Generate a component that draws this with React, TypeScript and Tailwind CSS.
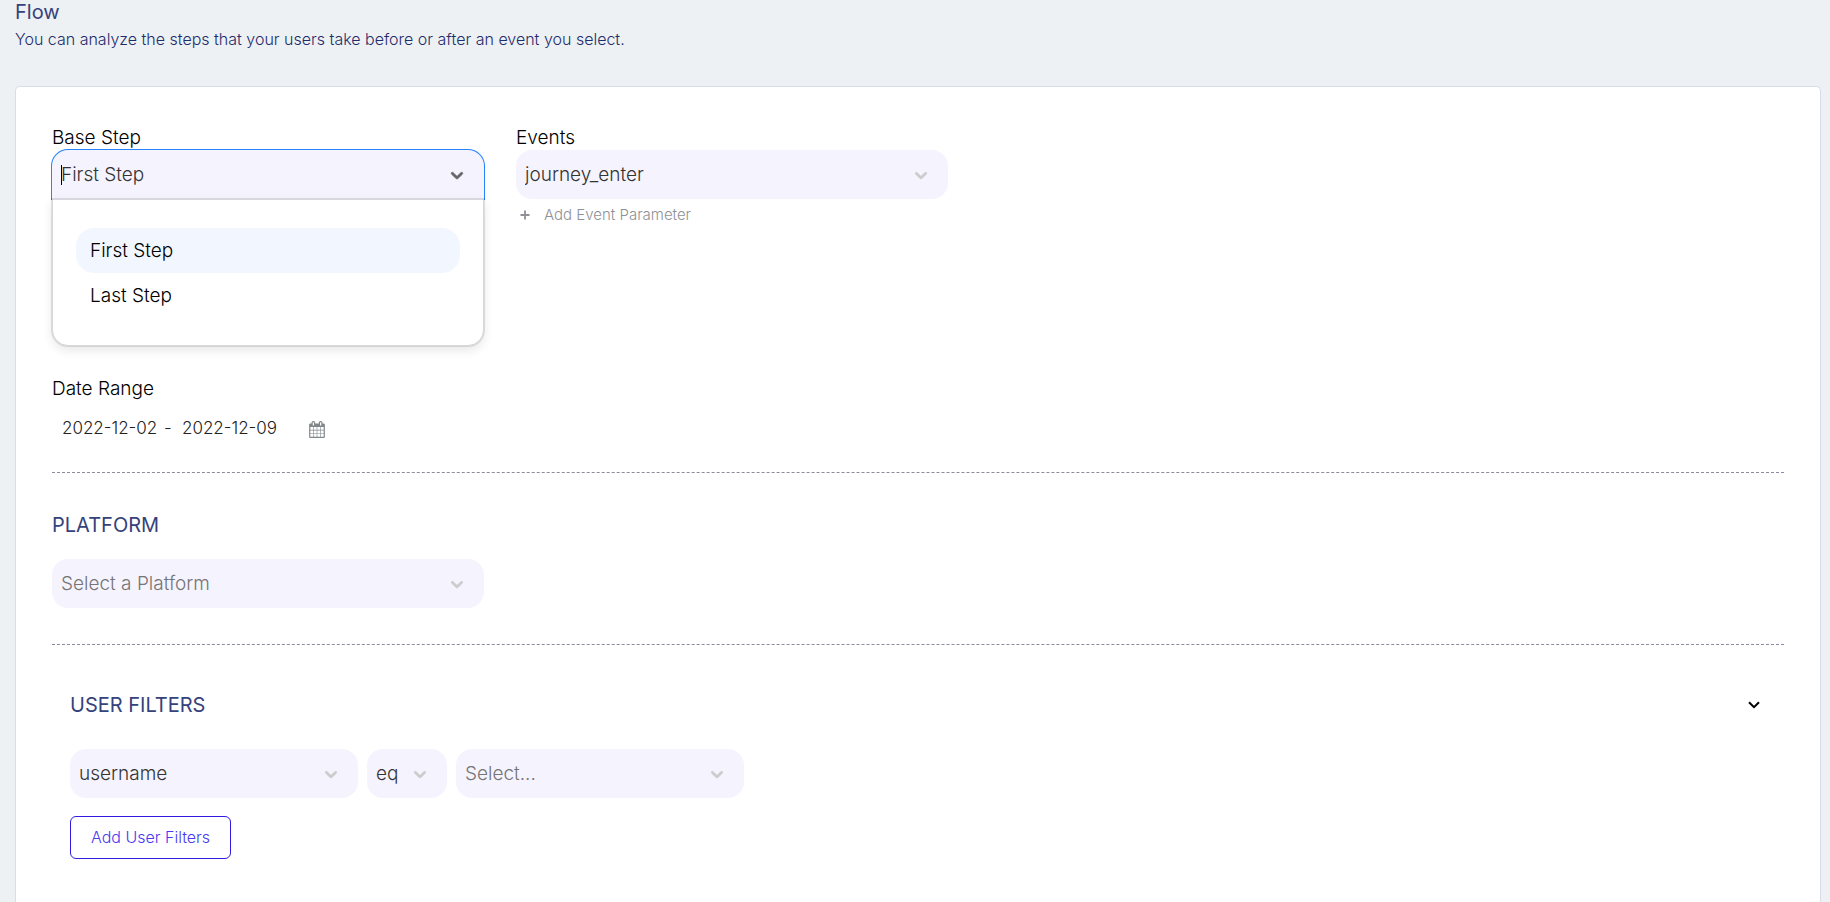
import { useState } from "react";
import type { ReactNode, SelectHTMLAttributes } from "react";

function Chevron({ className }: { className: string }) {
  return (
    <svg viewBox="0 0 20 20" aria-hidden="true" className={`size-5 fill-current stroke-current stroke-[0.6] ${className}`}>
      <path d="M4.516 7.548c0.436-0.446 1.043-0.481 1.576 0l3.908 3.747 3.908-3.747c0.533-0.481 1.141-0.446 1.574 0 0.436 0.445 0.408 1.197 0 1.615-0.406 0.418-4.695 4.502-4.695 4.502-0.217 0.223-0.502 0.335-0.787 0.335s-0.57-0.112-0.789-0.335c0 0-4.287-4.084-4.695-4.502s-0.436-1.17 0-1.615z" />
    </svg>
  );
}

function CalendarIcon() {
  return (
    <svg viewBox="0 0 1393.1 1500" aria-hidden="true" className="h-[17px] w-4 fill-[#82888a]">
      <path d="m107 1393h241v-241h-241z m295 0h268v-241h-268z m-295-295h241v-268h-241z m295 0h268v-268h-268z m-295-321h241v-241h-241z m616 616h268v-241h-268z m-321-616h268v-241h-268z m643 616h241v-241h-241z m-322-295h268v-268h-268z m-294-723v-241q0-11-8-19t-19-8h-54q-11 0-19 8t-8 19v241q0 11 8 19t19 8h54q11 0 19-8t8-19z m616 723h241v-268h-241z m-322-321h268v-241h-268z m322 0h241v-241h-241z m27-402v-241q0-11-8-19t-19-8h-54q-11 0-19 8t-8 19v241q0 11 8 19t19 8h54q11 0 19-8t8-19z m321-54v1072q0 43-32 75t-75 32h-1179q-43 0-75-32t-32-75v-1072q0-43 32-75t75-32h107v-80q0-56 39-95t95-39h54q55 0 94 39t39 95v80h322v-80q0-56 39-95t95-39h54q55 0 94 39t39 95v80h108q43 0 75 32t32 75z" />
    </svg>
  );
}

type SelectBoxProps = SelectHTMLAttributes<HTMLSelectElement> & { tone: string; children: ReactNode };

function SelectBox({ tone, children, ...rest }: SelectBoxProps) {
  return (
    <div className="grid h-[49px] items-center rounded-2xl bg-[#f5f3fe]">
      <select
        className={`col-start-1 row-start-1 h-full w-full appearance-none rounded-2xl bg-transparent pt-0.5 pr-8 pl-[9px] text-[19px] font-light outline-none ${tone}`}
        {...rest}
      >
        {children}
      </select>
      <Chevron className="pointer-events-none col-start-1 row-start-1 mr-[17px] justify-self-end text-[#cccccc]" />
    </div>
  );
}

const steps = ["First Step", "Last Step"];

export default function App() {
  const [step, setStep] = useState("First Step");

  return (
    <main className="flex min-h-screen flex-col bg-[#edf1f4] pr-[9px] pl-[15px] font-['Inter','Liberation_Sans',sans-serif] font-light text-black">
      <header className="pb-8 text-[#1f2c6b]">
        <h1 className="text-xl leading-6 font-normal text-[#36427c]">Flow</h1>
        <p className="text-base leading-[30px]">
          You can analyze the steps that your users take before or after an event you select.
        </p>
      </header>

      <section className="grow rounded-t-[5px] border border-b-0 border-[#dadde7] bg-white px-9 pt-[39px]">
        <div className="flex items-start gap-8">
          <div className="relative w-108">
            <label htmlFor="base-step" className="block text-[19px] leading-6">
              Base Step
            </label>
            <div className="flex h-[49px] items-center rounded-t-2xl bg-[#f5f3fe] pr-[17px] pl-[9px] ring-1 ring-[#2684ff]">
              <span className="-mr-px h-5 w-px shrink-0 bg-black" />
              <input
                id="base-step"
                role="combobox"
                aria-expanded="true"
                aria-controls="base-step-options"
                value={step}
                readOnly
                className="min-w-0 grow bg-transparent pt-0.5 text-[19px] text-[#333333] outline-none"
              />
              <Chevron className="shrink-0 text-[#666666]" />
            </div>
            <ul
              id="base-step-options"
              role="listbox"
              className="absolute top-full left-0 z-10 w-full rounded-b-2xl border border-[#d8d8dc] bg-white px-[23px] pt-7 pb-[27px] shadow-[0_0_0_1px_rgba(0,0,0,0.1),0_4px_11px_rgba(0,0,0,0.1)]"
            >
              {steps.map((name) => (
                <li
                  key={name}
                  role="option"
                  aria-selected={name === step}
                  onClick={() => setStep(name)}
                  className={`rounded-[18px] px-3.5 text-[19px] leading-[45px] ${name === step ? "bg-[#f2f7ff]" : ""}`}
                >
                  {name}
                </li>
              ))}
            </ul>
          </div>

          <div className="w-108">
            <label htmlFor="events" className="block text-[19px] leading-6">
              Events
            </label>
            <SelectBox id="events" tone="text-[#333333]">
              <option>journey_enter</option>
            </SelectBox>
            <button type="button" className="flex items-center gap-3.5 pt-1 pl-1 text-[15px] leading-6 text-[#8f9196]">
              <svg viewBox="0 0 10 10" aria-hidden="true" className="size-2.5 stroke-current stroke-[1.8]">
                <path d="M5 .5v9M.5 5h9" />
              </svg>
              Add Event Parameter
            </button>
          </div>
        </div>

        <div className="mt-[150px] border-b border-dashed border-[#8f8a9f] pb-[27px]">
          <label htmlFor="date-from" className="block text-[19px] leading-6">
            Date Range
          </label>
          <div className="flex h-11 items-center pt-3 pl-2 text-[17px] font-light text-[#222222]">
            <input id="date-from" aria-label="Start date" defaultValue="2022-12-02" className="w-[104px] px-0.5 outline-none" />
            <span className="w-4">-</span>
            <input aria-label="End date" defaultValue="2022-12-09" className="w-[104px] px-0.5 outline-none" />
            <button type="button" aria-label="Open calendar" className="ml-[25px]">
              <CalendarIcon />
            </button>
          </div>
        </div>

        <div className="border-b border-dashed border-[#8f8a9f] pt-10 pb-9">
          <h2 className="text-xl leading-6 font-normal text-[#36427c]">
            <label htmlFor="platform">PLATFORM</label>
          </h2>
          <div className="mt-[22px] w-108">
            <SelectBox id="platform" tone="text-[#757575]">
              <option>Select a Platform</option>
            </SelectBox>
          </div>
        </div>

        <div className="px-[18px] pt-12 pb-10">
          <div className="flex items-center justify-between">
            <h2 className="text-xl leading-6 font-normal text-[#36427c]">USER FILTERS</h2>
            <button type="button" aria-label="Collapse user filters" className="mr-1.5">
              <svg viewBox="0 0 12 8" aria-hidden="true" className="h-2 w-3 fill-none stroke-black stroke-2">
                <path d="M1 1.2l5 5 5-5" />
              </svg>
            </button>
          </div>
          <div className="mt-8 flex gap-[9px]">
            <div className="w-72">
              <SelectBox aria-label="Field" tone="text-[#333333]">
                <option>username</option>
              </SelectBox>
            </div>
            <div className="w-20">
              <SelectBox aria-label="Operator" tone="text-[#333333]">
                <option>eq</option>
              </SelectBox>
            </div>
            <div className="w-72">
              <SelectBox aria-label="Value" tone="text-[#757575]">
                <option>Select...</option>
              </SelectBox>
            </div>
          </div>
          <button
            type="button"
            className="mt-[18px] h-[43px] rounded-md border border-[#2f1ce0] px-5 pb-0.5 text-base text-[#4a38f0]"
          >
            Add User Filters
          </button>
        </div>
      </section>
    </main>
  );
}
